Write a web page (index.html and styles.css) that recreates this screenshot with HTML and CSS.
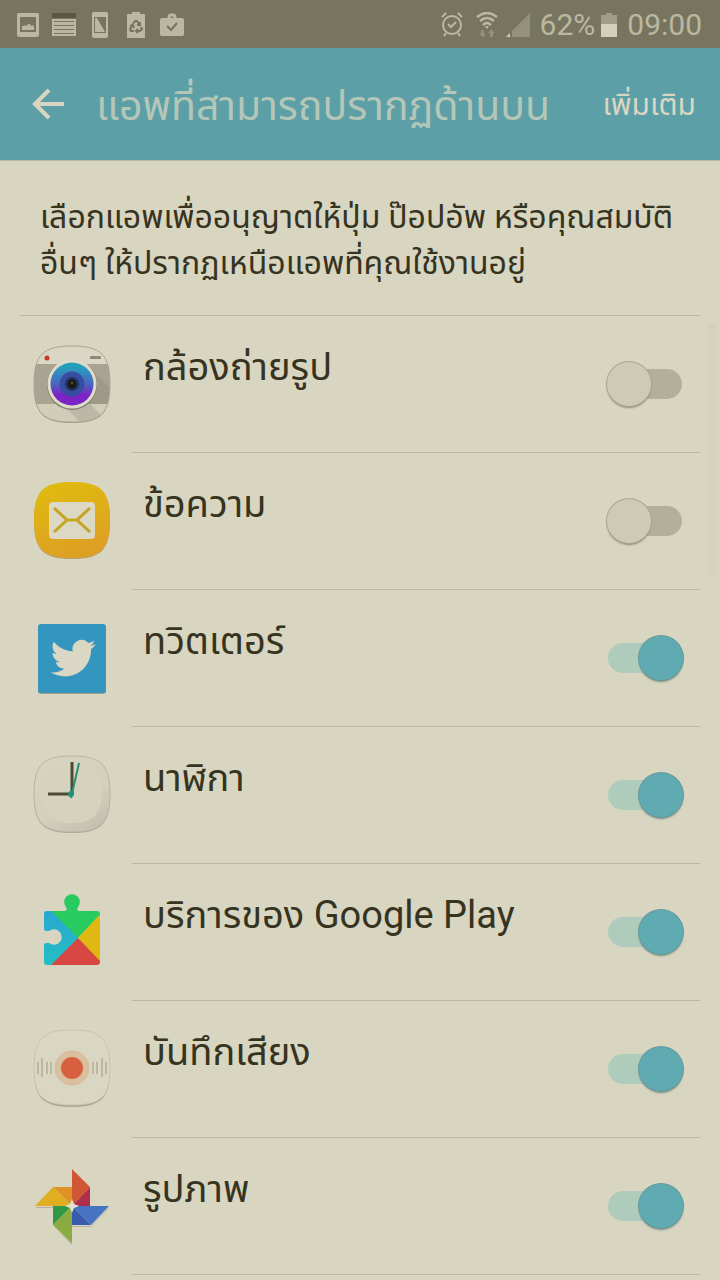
FILE: index.html
```html
<!DOCTYPE html>
<html lang="th">
<head>
  <meta charset="UTF-8" />
  <meta name="viewport" content="width=device-width, initial-scale=1" />
  <title>แอพที่สามารถปรากฏด้านบน</title>
  <link rel="stylesheet" href="styles.css">
</head>
<body>

  <div class="status-bar">
    <div class="status-left">
      <svg width="36" height="24" viewBox="0 0 22 24"><path fill="#bbb8a2" fill-rule="evenodd" d="M2 0h18a2 2 0 0 1 2 2v20a2 2 0 0 1-2 2H2a2 2 0 0 1-2-2V2a2 2 0 0 1 2-2zM3 4v15h16V4z"/><path fill="#bbb8a2" d="M5 17v-4h2l1-1 2 1 1-2h2l1 2 2-1 1 2v3z"/></svg>
      <svg width="36" height="24" viewBox="0 0 26 24"><path fill="#5b583f" d="M1 0h24v5H1z"/><path fill="#bbb8a2" d="M1 6h24v17H1z"/><path stroke="#77745f" d="M3 8.500h20M3 12.500h20M3 16.500h20M3 20.500h20"/></svg>
      <svg width="36" height="26" viewBox="0 0 16 26"><path fill="#bbb8a2" fill-rule="evenodd" d="M2 0h12a2 2 0 0 1 2 2v22a2 2 0 0 1-2 2H2a2 2 0 0 1-2-2V2a2 2 0 0 1 2-2zM2 5v16h12V5z"/><path fill="#bbb8a2" d="M3 6h2l8 14H3z"/></svg>
      <svg width="36" height="26" viewBox="0 0 18 26"><path fill="#bbb8a2" d="M5 0h8v2h5v24H0V2h5z"/><g fill="none" stroke="#77745f" stroke-width="2"><path d="M6 12l2-3h2l2 3M13 10v3h-3M14 15l1 2-2 2H9M11 17l-2 2 2 2M7 19H4l-1-2 2-3M3 14l3-1 1 3"/></g></svg>
      <svg width="36" height="24" viewBox="0 0 24 24"><path fill="none" stroke="#bbb8a2" stroke-width="3" d="M9 6V4a2 2 0 0 1 2-2h2a2 2 0 0 1 2 2v2"/><rect y="5" width="24" height="18" rx="2" fill="#bbb8a2"/><path fill="none" stroke="#77745f" stroke-width="2" d="M7 13l4 4 6-7"/></svg>
    </div>
    <div class="status-right">
      <svg class="alarm" width="22" height="26" viewBox="0 0 22 26"><g fill="none" stroke="#bbb8a2" stroke-width="2"><circle cx="11" cy="13" r="9"/><path d="M7 12l3 3 5-5M1 5l4-4M21 5l-4-4M5 21l-2 3M17 21l2 3"/></g></svg>
      <svg class="wifi" width="22" height="26" viewBox="0 0 22 26"><g fill="none" stroke="#bbb8a2" stroke-width="2.500"><path d="M1 5q10-8 20 0M4 9q7-6 14 0M7 13q4-4 8 0"/></g><path fill="#bbb8a2" d="M9 14h4l-2 3z"/><path fill="#94917b" d="M5 18h3v4h2l-3 3-4-3h2zM17 25h-3v-4h-2l3-4 4 4h-2z"/></svg>
      <svg class="signal" width="24" height="26" viewBox="0 0 24 26"><path fill="#94917b" d="M24 1v24H6v-6z"/><path fill="#cfccb6" d="M0 25l4-4v4z"/></svg>
      <span class="percent">62%</span>
      <svg class="battery" width="16" height="26" viewBox="0 0 16 26"><path fill="#a19e88" d="M5 1h6v2h5v9H0V3h5z"/><path fill="#d3d0bb" d="M0 12h16v13H0z"/></svg>
      <span>09:00</span>
    </div>
  </div>

  <header class="app-bar">
    <button class="back" type="button" aria-label="กลับ">
      <svg width="32" height="32" viewBox="0 0 32 32"><path fill="none" stroke="#d8d6c2" stroke-width="4" d="M17 2L3 16l14 14M3 16h29"/></svg>
    </button>
    <h1>แอพที่สามารถปรากฏด้านบน</h1>
    <button class="more" type="button">เพิ่มเติม</button>
  </header>

  <main>
    <p class="intro">เลือกแอพเพื่ออนุญาตให้ปุ่ม ป๊อปอัพ หรือคุณสมบัติ<br>อื่นๆ ให้ปรากฏเหนือแอพที่คุณใช้งานอยู่</p>

    <ul class="app-list">
      <li class="app">
        <svg class="icon" viewBox="0 0 80 80">
          <defs>
            <linearGradient id="lens" x1="0" y1="0" x2="0" y2="1"><stop offset="0.100" stop-color="#269fbd"/><stop offset="0.500" stop-color="#4866c0"/><stop offset="0.750" stop-color="#7b24c6"/></linearGradient>
            <clipPath id="cameraBody"><path d="M40 2C69 2 78 11 78 40S69 78 40 78 2 69 2 40 11 2 40 2z"/></clipPath>
          </defs>
          <path fill="#a39f8d" d="M40 3C69 3 78 12 78 41S69 79 40 79 2 70 2 41 11 3 40 3z"/>
          <g clip-path="url(#cameraBody)">
            <path fill="#dad7c4" d="M0 0h80v80H0z"/>
            <path fill="#a8a491" d="M0 20h80v40H0z"/>
            <path fill="#918d7b" opacity="0.400" d="M58 24l20 20v16H54z"/>
            <path fill="#d0cdb9" d="M0 60h80v20H0z"/>
            <path fill="#bbb8a5" d="M30 60h28l14 14-10 6H50z"/>
          </g>
          <path fill="none" stroke="#aaa692" d="M40 2C69 2 78 11 78 40S69 78 40 78 2 69 2 40 11 2 40 2z"/>
          <circle cx="15" cy="14" r="2.500" fill="#cb3528"/>
          <rect x="58" y="12" width="11" height="3" rx="1" fill="#8d8977"/>
          <circle cx="40" cy="41" r="25" fill="#858170"/>
          <circle cx="40" cy="40" r="24.500" fill="#dedbc8"/>
          <circle cx="40" cy="40" r="21.500" fill="url(#lens)"/>
          <circle cx="40" cy="40" r="12.500" fill="#374d9f"/>
          <circle cx="40" cy="40" r="7" fill="#26315f"/>
          <circle cx="40" cy="40" r="4.500" fill="#161815"/>
          <circle cx="40" cy="39" r="1.500" fill="#4b4a27"/>
        </svg>
        <label for="camera">กล้องถ่ายรูป</label>
        <input class="switch" type="checkbox" id="camera">
      </li>
      <li class="app">
        <svg class="icon" viewBox="0 0 80 80">
          <defs><linearGradient id="mail" x1="0" y1="0" x2="0.300" y2="1"><stop offset="0" stop-color="#dfbd0d"/><stop offset="1" stop-color="#dea022"/></linearGradient></defs>
          <path fill="#b5a272" d="M40 2C69 2 78 11 78 40S69 78 40 78 2 69 2 40 11 2 40 2z"/>
          <path fill="url(#mail)" d="M40 1C69 1 78 10 78 39S69 77 40 77 2 68 2 39 11 1 40 1z"/>
          <rect x="17" y="21" width="46" height="37" rx="4" fill="#dbd8c4"/>
          <path fill="none" stroke="#c8a31f" stroke-width="3" d="M22 27l13 12-13 12M58 27L45 39l13 12M35 39h10"/>
        </svg>
        <label for="messages">ข้อความ</label>
        <input class="switch" type="checkbox" id="messages">
      </li>
      <li class="app">
        <svg class="icon" viewBox="0 0 80 80">
          <rect x="6" y="7" width="68" height="69" rx="3" fill="#a29f8b"/>
          <rect x="6" y="6" width="68" height="69" rx="3" fill="#3495bf"/>
          <path fill="#dad7c4" transform="translate(18.700 17.800) scale(1.870)" d="M23.953 4.570a10 10 0 01-2.825.775 4.958 4.958 0 002.163-2.723c-.951.555-2.005.959-3.127 1.184a4.920 4.920 0 00-8.384 4.482C7.690 8.095 4.067 6.130 1.640 3.162a4.822 4.822 0 00-.666 2.475c0 1.710.870 3.213 2.188 4.096a4.904 4.904 0 01-2.228-.616v.060a4.923 4.923 0 003.946 4.827 4.996 4.996 0 01-2.212.085 4.936 4.936 0 004.604 3.417 9.867 9.867 0 01-6.102 2.105c-.390 0-.779-.023-1.170-.067a13.995 13.995 0 007.557 2.209c9.053 0 13.998-7.496 13.998-13.985 0-.210 0-.420-.015-.630A9.935 9.935 0 0024 4.590z"/>
        </svg>
        <label for="twitter">ทวิตเตอร์</label>
        <input class="switch" type="checkbox" id="twitter" checked>
      </li>
      <li class="app">
        <svg class="icon" viewBox="0 0 80 80">
          <defs><linearGradient id="dial" x1="0.200" y1="0" x2="0.800" y2="1"><stop offset="0" stop-color="#d7d4c0"/><stop offset="0.600" stop-color="#d2cfbc"/><stop offset="1" stop-color="#c4bfae"/></linearGradient></defs>
          <path fill="#a9a592" d="M40 2C69 2 78 11 78 40S69 78 40 78 2 69 2 40 11 2 40 2z"/>
          <path fill="url(#dial)" stroke="#b9b5a2" d="M40 1C69 1 78 10 78 39S69 77 40 77 2 68 2 39 11 1 40 1z"/>
          <path fill="#d5d2be" d="M40 10C62 10 71 16 70 38S60 68 40 68 12 62 11 39 18 10 40 10z"/>
          <path stroke="#4f4938" stroke-width="3" d="M16 39h24M40 7v32"/>
          <path stroke="#268f78" stroke-width="2" d="M47 8l-8 35"/>
          <circle cx="39" cy="39" r="3" fill="#268f78"/>
        </svg>
        <label for="clock">นาฬิกา</label>
        <input class="switch" type="checkbox" id="clock" checked>
      </li>
      <li class="app">
        <svg class="icon" viewBox="0 0 80 80">
          <defs>
            <linearGradient id="playBlue" x1="0" y1="0" x2="0" y2="1"><stop offset="0" stop-color="#2aa6d3"/><stop offset="1" stop-color="#22c0c2"/></linearGradient>
            <clipPath id="piece"><path d="M15 19h18c2 0 2-2 1-4a7.800 7.800 0 1 1 12 0c-1 2-1 4 1 4h18a3 3 0 0 1 3 3v48a3 3 0 0 1-3 3H15a3 3 0 0 1-3-3V53c0-2 2-2 5-2a7.800 7.800 0 1 0 0-12c-3 0-5 0-5-2V22a3 3 0 0 1 3-3z"/></clipPath>
          </defs>
          <g clip-path="url(#piece)">
            <path fill="url(#playBlue)" d="M10 18h36v56H10z"/>
            <path fill="#27cb5f" d="M19 19V0h50v22L46 46z"/>
            <path fill="#dfb911" d="M70 20v54L46 46z"/>
            <path fill="#d94743" d="M19 73l27-27 24 25v4H19z"/>
          </g>
        </svg>
        <label for="play">บริการของ Google Play</label>
        <input class="switch" type="checkbox" id="play" checked>
      </li>
      <li class="app">
        <svg class="icon" viewBox="0 0 80 80">
          <path fill="#a9a692" d="M40 2C69 2 78 11 78 40S69 78 40 78 2 69 2 40 11 2 40 2z"/>
          <path fill="#d9d6c2" stroke="#c8c5b1" d="M40 1C69 1 78 10 78 39S69 76 40 76 2 68 2 39 11 1 40 1z"/>
          <path stroke="#bab8a4" stroke-width="2" d="M6 33v12M10 29v19M15 33v12M19 33v12M61 33v12M65 33v12M70 29v19M74 33v12"/>
          <circle cx="40" cy="39" r="17.500" fill="#dabf9f"/>
          <circle cx="40" cy="39" r="11" fill="#d7603f"/>
        </svg>
        <label for="recorder">บันทึกเสียง</label>
        <input class="switch" type="checkbox" id="recorder" checked>
      </li>
      <li class="app">
        <svg class="icon" viewBox="0 0 80 80">
          <path fill="#b4b19d" d="M4 41h36v1H4zM40 60h19l17-18v1L59 61H40zM21 60l19 19v-2z"/>
          <path fill="#cf5736" d="M40 3l18 18-18 19z"/>
          <path fill="#ad2f4c" d="M58 21v19H40z"/>
          <path fill="#e19225" d="M21 21h19v19z"/>
          <path fill="#e0ae22" d="M3 40l18-19 19 19z"/>
          <path fill="#309847" d="M21 40h19L21 59z"/>
          <path fill="#89ab42" d="M40 40v37L21 59z"/>
          <path fill="#4774c2" d="M40 40h37L59 59z"/>
          <path fill="#375cae" d="M40 40l19 19H40z"/>
          <path fill="#e4e2d0" d="M40 33l2 5 5 2-5 2-2 5-2-5-5-2 5-2z"/>
        </svg>
        <label for="photos">รูปภาพ</label>
        <input class="switch" type="checkbox" id="photos" checked>
      </li>
    </ul>
  </main>

</body>
</html>
```
FILE: styles.css
```css
* {
  box-sizing: border-box;
}
body {
  margin: 0;
  background: #d8d5c0;
  color: #36331f;
  font-family: Roboto, "Droid Sans Thai", "Noto Sans Thai", "Noto Sans", sans-serif;
}
svg {
  display: block;
  flex: none;
}
.status-bar {
  display: flex;
  justify-content: space-between;
  align-items: center;
  height: 48px;
  padding: 2px 18px 0 10px;
  background: #77745f;
  color: #bbb8a2;
  font-size: 30px;
  line-height: 46px;
}
.status-left {
  display: flex;
  align-items: center;
}
.status-right {
  display: flex;
  align-items: center;
}
.wifi {
  margin-left: 13px;
}
.signal {
  margin: 0 10px 0 8px;
}
.battery {
  margin: 0 10px 0 6px;
}
.app-bar {
  display: flex;
  align-items: center;
  height: 112px;
  padding: 0 24px 0 32px;
  background: #5c9fa6;
  box-shadow: 0 1px 0 #b5b8a6;
}
.app-bar button {
  padding: 0;
  border: none;
  background: none;
  color: #d8d6c2;
  font-family: inherit;
  font-size: 30px;
  cursor: pointer;
}
.app-bar .more {
  padding-top: 4px;
}
.app-bar h1 {
  flex: 1;
  margin: 0 0 0 32px;
  padding-top: 4px;
  color: #b4c6b8;
  font-size: 41px;
  font-weight: normal;
  line-height: 56px;
  white-space: nowrap;
}
main {
  position: relative;
}
/* scroll thumb */
main::after {
  content: "";
  position: absolute;
  top: 163px;
  right: 4px;
  width: 8px;
  height: 254px;
  background: #d5d2bc;
}
.intro {
  margin: 0 20px;
  padding: 34px 20px 29px;
  border-bottom: 1px solid #bbb8a4;
  font-size: 32px;
  line-height: 46px;
  white-space: nowrap;
}
.app-list {
  margin: 0;
  padding: 0;
  list-style: none;
}
.app {
  display: flex;
  align-items: center;
  height: 137px;
  padding: 0 36px 1px 32px;
  background: linear-gradient(#bbb8a4, #bbb8a4) no-repeat 132px 100% / calc(100% - 152px) 1px;
}
.icon {
  width: 80px;
  height: 80px;
}
.app label {
  flex: 1;
  align-self: stretch;
  padding: 24px 0 0 31px;
  font-size: 38px;
  line-height: 54px;
}
.switch {
  appearance: none;
  display: grid;
  align-items: center;
  width: 78px;
  height: 46px;
  margin: 0;
  cursor: pointer;
}
.switch::before,
.switch::after {
  content: "";
  grid-area: 1 / 1;
}
.switch::before {
  height: 30px;
  margin: 0 2px;
  border-radius: 15px;
  background: #b2af9a;
}
.switch::after {
  width: 44px;
  height: 44px;
  margin: 0 1px;
  border-radius: 50%;
  background: #cdcab6;
  box-shadow: 0 0 0 1px #a9a692, 0 2px 2px #8b8874;
}
.switch:checked::before {
  background: #afcbbb;
}
.switch:checked::after {
  justify-self: end;
  background: #60abb2;
  box-shadow: 0 0 0 1px #649a9c, 0 2px 2px #7d8c80;
}
```
